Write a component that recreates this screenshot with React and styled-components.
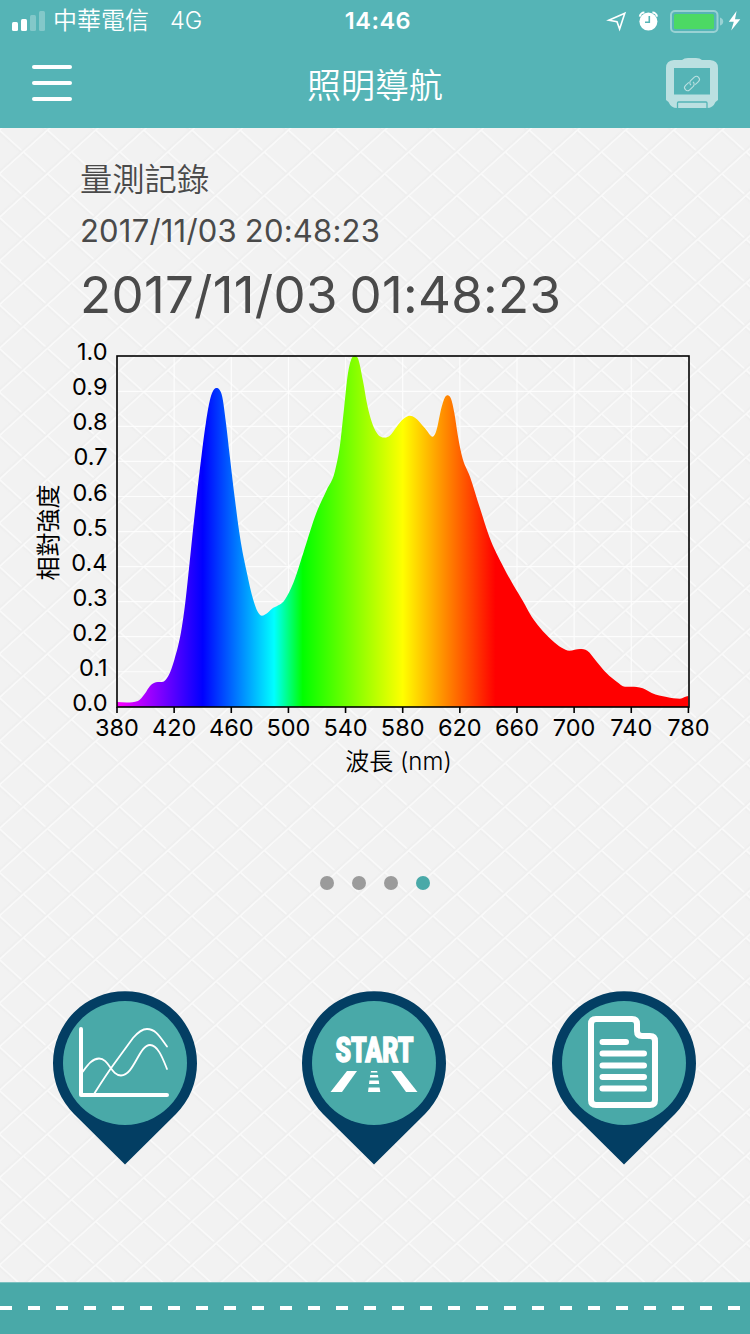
import React from "react";
import styled, { createGlobalStyle } from "styled-components";

const GlobalStyle = createGlobalStyle`
  * {
    box-sizing: border-box;
  }

  body {
    margin: 0;
    font-family: Inter, "Noto Sans CJK TC", sans-serif;
  }
`;

const Screen = styled.div`
  display: flex;
  flex-direction: column;
  width: 750px;
  height: 1334px;
  overflow: hidden;
  background-color: #f2f2f2;
  background-image: repeating-linear-gradient(
      137.82deg,
      transparent 0 27.5px,
      #eeeeee 29.8px,
      #f9f9f9 31px,
      #f9f9f9 31.8px,
      transparent 32.35px
    ),
    repeating-linear-gradient(
      42.18deg,
      transparent 0 14.4px,
      #eeeeee 16.7px,
      #f9f9f9 17.9px,
      #f9f9f9 18.7px,
      transparent 19.4px 32.35px
    );
`;

const Header = styled.header`
  flex: none;
  height: 128px;
  background-color: #55b4b6;
  color: #fff;
`;

const StatusBar = styled.div`
  display: grid;
  grid-template-columns: 1fr auto 1fr;
  align-items: center;
  height: 40px;
  padding: 0 9px 0 12px;
  font-size: 24px;
  line-height: 40px;
`;

const StatusGroup = styled.div`
  display: flex;
  align-items: center;
  justify-content: ${(props) => (props.$end ? "flex-end" : "flex-start")};
`;

const Carrier = styled.span`
  margin-left: 8px;
  padding-top: 1px;
  font-weight: 350;
`;

const Network = styled.span`
  margin-left: 21px;
  padding-top: 1px;
  font-size: 23.5px;
  font-weight: 350;
`;

const Clock = styled.span`
  font-size: 23.5px;
  font-weight: 600;
  letter-spacing: 0.5px;
  padding: 1px 0 0 3px;
`;

const NavBar = styled.div`
  display: grid;
  grid-template-columns: 1fr auto 1fr;
  align-items: center;
  height: 88px;
  padding: 0 32px;
`;

const MenuButton = styled.button`
  display: flex;
  flex-direction: column;
  gap: 12px;
  width: 40px;
  padding: 0;
  margin-bottom: 2px;
  border: none;
  background: none;
`;

const MenuLine = styled.span`
  width: 40px;
  height: 4px;
  border-radius: 2px;
  background-color: #fff;
`;

const Title = styled.h1`
  margin: 0;
  padding-top: 3px;
  font-size: 34px;
  font-weight: 350;
  line-height: 85px;
`;

const DeviceButton = styled.button`
  justify-self: end;
  display: flex;
  padding: 0;
  margin-bottom: 2px;
  border: none;
  background: none;
`;

const Record = styled.section`
  flex: none;
  height: 202px;
  padding: 28px 0 0 80px;
  color: #4a4a4a;
`;

const RecordTitle = styled.h2`
  margin: 0;
  font-size: 32.3px;
  font-weight: 350;
  line-height: 47px;
`;

const RecordTime = styled.p`
  margin: 0;
  white-space: nowrap;
  font-weight: 400;
  font-size: ${(props) => (props.$large ? "51px" : "31px")};
  line-height: ${(props) => (props.$large ? "73px" : "55px")};
  letter-spacing: ${(props) => (props.$large ? "0.3px" : "0.2px")};
  word-spacing: ${(props) => (props.$large ? "-3px" : "-1px")};
`;

const Chart = styled.svg`
  flex: none;
  display: block;
`;

const Dots = styled.div`
  display: flex;
  justify-content: center;
  gap: 18px;
  padding-top: 96px;
  height: 211px;
`;

const Dot = styled.span`
  width: 14px;
  height: 14px;
  border-radius: 50%;
  background-color: ${(props) => (props.$active ? "#49a9a8" : "#9b9b9b")};
`;

const Actions = styled.nav`
  display: flex;
  justify-content: space-between;
  padding: 0 54.5px 0 53px;
`;

const PinButton = styled.button`
  display: block;
  padding: 0;
  border: none;
  background: none;
  line-height: 0;
`;

const Road = styled.footer`
  display: flex;
  align-items: center;
  height: 52.5px;
  margin-top: auto;
  background-color: #49a9a8;
  border-top: 1px solid #7cc0c0;
`;

const RoadLine = styled.div`
  width: 100%;
  height: 4px;
  background: repeating-linear-gradient(
    to right,
    #fff 0 12px,
    transparent 12px 28px
  );
`;

/* Chart data, in chart pixels */
const curve = [
  [117, 702], [126.7, 702.5], [138, 701], [145, 693.5], [150, 686],
  [156, 682.3], [163.3, 681.7], [168.3, 676], [174.3, 660], [181.7, 628],
  [185, 605], [188.3, 575], [193.3, 527], [200, 468], [206, 422],
  [211, 396], [214, 389.5], [216.7, 388], [219.3, 389.5], [222.3, 397],
  [225.7, 421], [230, 458], [235, 500], [240, 537], [246.7, 572],
  [253.3, 600], [257.3, 611], [262, 615.7], [266, 614], [271.7, 609],
  [285, 599.5], [293.3, 583], [303.3, 553], [316.7, 512], [326.7, 490],
  [335, 471], [340, 445], [344, 409], [348, 373], [351, 360],
  [354.7, 355.7], [358, 358.5], [363, 381], [367.3, 405], [371.7, 421.7],
  [376.7, 432.8], [385, 437.7], [390, 435.5], [396.7, 426.7], [403.3, 419],
  [410, 415.7], [415, 417.7], [425, 428.3], [432.7, 436.7], [436, 431.7],
  [441.7, 406.7], [445, 397.2], [447.7, 395.3], [451, 398.8],
  [454.3, 412.7], [457.7, 434.7], [461.7, 455], [470, 476.7],
  [480, 508.3], [489.3, 536.7], [503.3, 566.7], [513.3, 585],
  [523.3, 601.7], [531.7, 616.7], [540, 627.7], [551.7, 640],
  [561.7, 647.7], [569.3, 650.7], [580, 649], [587.3, 650.7],
  [596.7, 661.7], [606.7, 673.3], [616.7, 681.7], [625, 686.7],
  [636.7, 687], [642.7, 688.3], [651.7, 693], [666.7, 697],
  [680, 698.7], [688.3, 696],
];

const spectrum = [
  [380, "#ff00ff"],
  [440, "#0000ff"],
  [490, "#00ffff"],
  [510, "#00ff00"],
  [580, "#ffff00"],
  [645, "#ff0000"],
  [780, "#ff0000"],
];

const wavelengths = [380, 420, 460, 500, 540, 580, 620, 660, 700, 740, 780];
const levels = [0, 1, 2, 3, 4, 5, 6, 7, 8, 9, 10];

const xOf = (nm) => 117 + (nm - 380) * 1.4285;
const yOf = (level) => 706.8 - level * 35.05;

// monotone cubic, so that the peaks do not overshoot
function smooth(points) {
  const slopes = points.map((p, i) => {
    const prev = points[i - 1];
    const next = points[i + 1];
    if (!prev || !next) return 0;
    const h0 = p[0] - prev[0];
    const h1 = next[0] - p[0];
    const s0 = (p[1] - prev[1]) / h0;
    const s1 = (next[1] - p[1]) / h1;
    if (s0 * s1 <= 0) return 0;
    const mean = (s0 * h1 + s1 * h0) / (h0 + h1);
    const limit = 3 * Math.min(Math.abs(s0), Math.abs(s1));
    return Math.sign(mean) * Math.min(Math.abs(mean), limit);
  });

  let d = `M${points[0][0]} ${points[0][1]}`;
  for (let i = 0; i < points.length - 1; i++) {
    const [x0, y0] = points[i];
    const [x1, y1] = points[i + 1];
    const h = (x1 - x0) / 3;
    d += `C${x0 + h} ${y0 + slopes[i] * h} ${x1 - h} ${y1 - slopes[i + 1] * h} ${x1} ${y1}`;
  }
  return d;
}

function SpectrumChart() {
  return (
    <Chart width="750" height="450" viewBox="0 330 750 450">
      <defs>
        <linearGradient
          id="spectrum"
          gradientUnits="userSpaceOnUse"
          x1={xOf(380)}
          x2={xOf(780)}
          y1="0"
          y2="0"
        >
          {spectrum.map(([nm, color]) => (
            <stop key={nm} offset={(nm - 380) / 400} stopColor={color} />
          ))}
        </linearGradient>
      </defs>
      <g stroke="#fff" strokeWidth="1.2" opacity="0.85">
        {levels.slice(1, 10).map((level) => (
          <line key={level} x1="117" x2="689" y1={yOf(level)} y2={yOf(level)} />
        ))}
        {wavelengths.slice(1, 10).map((nm) => (
          <line key={nm} x1={xOf(nm)} x2={xOf(nm)} y1="356" y2="707" />
        ))}
      </g>
      <path d={`${smooth(curve)}V707H117Z`} fill="url(#spectrum)" />
      <g stroke="#000" strokeWidth="1.6" fill="none">
        <rect x="117" y="356" width="572" height="351" />
        {wavelengths.map((nm) => (
          <line key={nm} x1={xOf(nm)} x2={xOf(nm)} y1="707" y2="713" />
        ))}
      </g>
      <g fontSize="23.5" fill="#000">
        {levels.map((level) => (
          <text key={level} x="107.5" y={yOf(level) + 4} textAnchor="end">
            {(level / 10).toFixed(1)}
          </text>
        ))}
        {wavelengths.map((nm) => (
          <text key={nm} x={xOf(nm)} y="736" textAnchor="middle">
            {nm}
          </text>
        ))}
        <text
          x="398.5"
          y="769.5"
          textAnchor="middle"
          fontSize="24"
          fontWeight="350"
        >
          波長 (nm)
        </text>
        <text
          transform="translate(56.500 532.5) rotate(-90)"
          textAnchor="middle"
          fontSize="24"
        >
          相對強度
        </text>
      </g>
    </Chart>
  );
}

function SignalIcon() {
  return (
    <svg width="33" height="40" fill="#fff">
      <rect x="0" y="21" width="6" height="9" rx="1.5" />
      <rect x="9" y="18" width="6" height="12" rx="1.5" />
      <rect x="18" y="14" width="6" height="16" rx="1.5" opacity="0.27" />
      <rect x="27" y="10" width="6" height="20" rx="1.5" opacity="0.27" />
    </svg>
  );
}

function StatusIcons() {
  return (
    <svg width="141" height="40" viewBox="600 0 141 40" fill="none">
      <path
        d="M624.8 12.2L608.8 19.2L617 20.7L619.6 28Z"
        stroke="#fff"
        strokeWidth="1.6"
      />
      <circle cx="648.4" cy="20.6" r="9" fill="#fff" />
      <path
        d="M639.8 15.6A4.5 4.5 0 0 1 644.4 11.6M652.4 11.6A4.5 4.5 0 0 1 657 15.6"
        stroke="#fff"
        strokeWidth="2"
      />
      <path d="M649.3 15V21.3H645" stroke="#55b4b6" strokeWidth="1.6" />
      <rect
        x="671"
        y="10"
        width="46.5"
        height="21"
        rx="4"
        stroke="#9ad2d4"
        strokeWidth="2"
      />
      <rect x="674" y="13" width="40" height="15" rx="1.5" fill="#4cd964" />
      <path d="M720 16.5Q723.2 17.5 723.2 20.5T720 24.5Z" fill="#9ad2d4" />
      <path
        d="M736.6 10L728.8 20.8H733.8L731.2 29.5L740.3 18.2H735Z"
        fill="#fff"
      />
    </svg>
  );
}

function DeviceIcon() {
  return (
    <svg width="52" height="50" viewBox="666 58 52 50" fill="none">
      <path
        d="M682 60Q684 58 688 58H696Q700 58 702 60H710Q718 60.500 718 68V100L715.500 102Q713 108 707 108H677Q671 108 668.500 102L666 100V68Q666 60.500 674 60Z"
        fill="#bbe0e1"
      />
      <rect x="674" y="68" width="36" height="26.500" fill="#55b4b6" />
      <path
        d="M677.500 108V103Q677.500 102 678.500 102H706Q707 102 707 103V108"
        stroke="#55b4b6"
        strokeWidth="1.3"
      />
      <g
        stroke="#bbe0e1"
        strokeWidth="1.100"
        transform="translate(692 83.500) rotate(-43)"
      >
        <path d="M-1.500 -3H-6A3 3 0 0 0 -6 3H-1A3 3 0 0 0 1.800 -0.500" />
        <path d="M1.500 3H6A3 3 0 0 0 6 -3H1A3 3 0 0 0 -1.800 0.500" />
      </g>
    </svg>
  );
}

function Pin({ label, children }) {
  return (
    <PinButton aria-label={label}>
      <svg width="144" height="174" viewBox="-72 -72 144 174" fill="none">
        <path d="M-51 51A72 72 0 1 1 51 51L0 101.500Z" fill="#033e63" />
        <circle r="62" fill="#49a9a8" />
        {children}
      </svg>
    </PinButton>
  );
}

function GraphGlyph() {
  return (
    <g stroke="#fff" strokeLinecap="round" strokeLinejoin="round">
      <path d="M-44 -34V32H42" strokeWidth="4" />
      <path
        d="M-42.500 9C-38 3 -33 -4.500 -26 -4.500C-16 -4.500 -14 12.500 -4 12.500C9 12.500 14 -18 25 -18C33 -18 38 -4 42 6"
        strokeWidth="1.8"
      />
      <path
        d="M-31 31C-24 20 -19 12 -11 1L8 -25C14 -32 18 -34 22 -34C31 -34 35 -26 42 -16.500"
        strokeWidth="1.8"
      />
    </g>
  );
}

function StartGlyph() {
  return (
    <g fill="#fff">
      <text
        x="-38.500"
        y="-1.500"
        fontFamily="Roboto, sans-serif"
        fontWeight="900"
        fontSize="34.500"
        textLength="78"
        lengthAdjust="spacingAndGlyphs"
        stroke="#fff"
        strokeWidth="1.4"
      >
        START
      </text>
      <path d="M-27 8H-17L-32 29H-43.500Z" />
      <path d="M17 8H27L43.500 29H32Z" />
      <path d="M-3 8H3.200L3.500 9.500H-3.300Z" />
      <path d="M-3.800 12H4L4.300 14.500H-4.100Z" />
      <path d="M-4.600 17.500H4.800L5.200 21H-5Z" />
      <path d="M-5.400 24.500H5.600L6.300 29H-6Z" />
    </g>
  );
}

function DocumentGlyph() {
  return (
    <g stroke="#fff" strokeWidth="6" strokeLinejoin="round">
      <path d="M-28 -44H8Q13 -44 13 -39V-32Q13 -27 18 -27H26Q31 -27 31 -22V37Q31 42 26 42H-28Q-33 42 -33 37V-39Q-33 -44 -28 -44Z" />
      <path
        d="M-21.500 -21H2M-21.500 -9.500H20M-21.500 2.500H20M-21.500 14H20M-21.500 25.500H20"
        strokeLinecap="round"
      />
    </g>
  );
}

function App() {
  return (
    <>
      <GlobalStyle />
      <Screen>
        <Header>
          <StatusBar>
            <StatusGroup>
              <SignalIcon />
              <Carrier>中華電信</Carrier>
              <Network>4G</Network>
            </StatusGroup>
            <Clock>14:46</Clock>
            <StatusGroup $end>
              <StatusIcons />
            </StatusGroup>
          </StatusBar>
          <NavBar>
            <MenuButton aria-label="menu">
              <MenuLine />
              <MenuLine />
              <MenuLine />
            </MenuButton>
            <Title>照明導航</Title>
            <DeviceButton aria-label="device">
              <DeviceIcon />
            </DeviceButton>
          </NavBar>
        </Header>

        <Record>
          <RecordTitle>量測記錄</RecordTitle>
          <RecordTime>2017/11/03 20:48:23</RecordTime>
          <RecordTime $large>2017/11/03 01:48:23</RecordTime>
        </Record>

        <SpectrumChart />

        <Dots>
          <Dot />
          <Dot />
          <Dot />
          <Dot $active />
        </Dots>

        <Actions>
          <Pin label="chart">
            <GraphGlyph />
          </Pin>
          <Pin label="start">
            <StartGlyph />
          </Pin>
          <Pin label="records">
            <DocumentGlyph />
          </Pin>
        </Actions>

        <Road>
          <RoadLine />
        </Road>
      </Screen>
    </>
  );
}

export default App;
